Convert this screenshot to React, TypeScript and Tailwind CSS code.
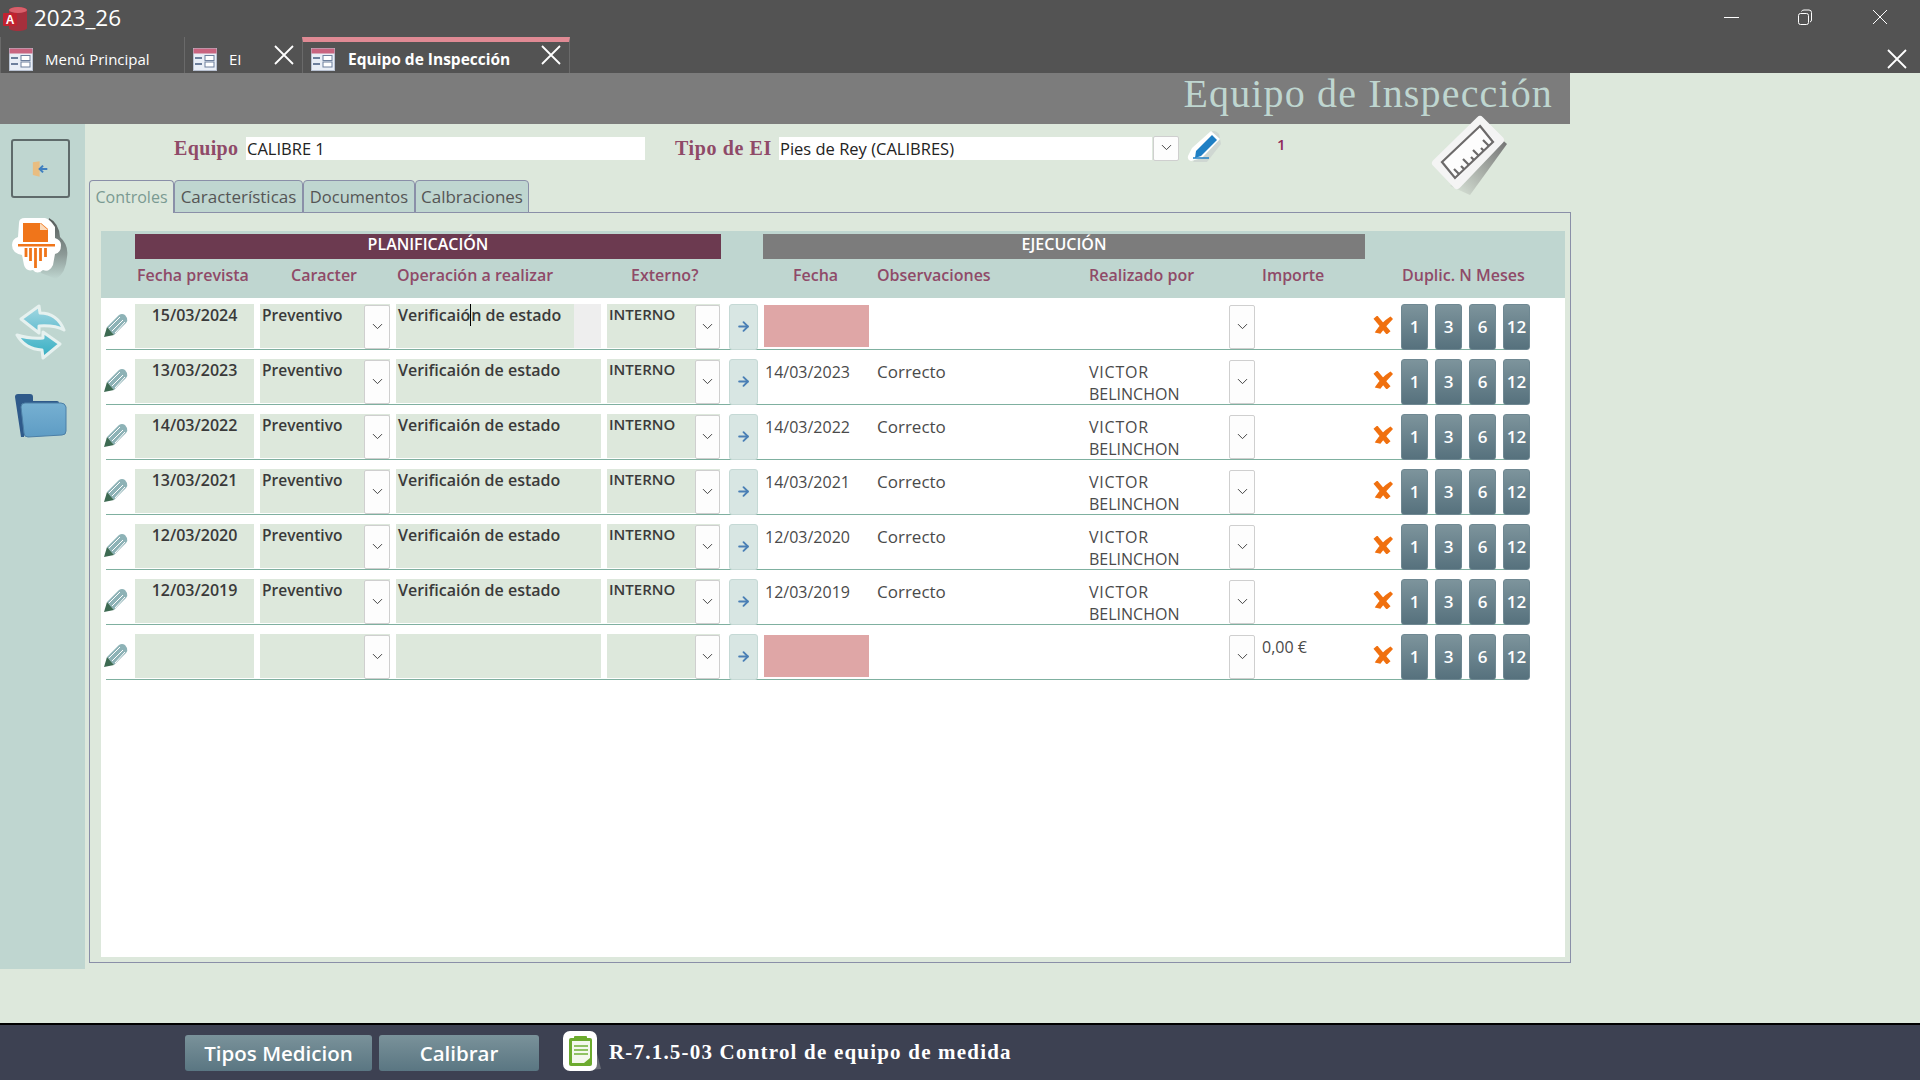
import { ArrowRight, ChevronDown } from "lucide-react";

const sans = "font-['Open_Sans',sans-serif]";
const serif = "font-['Liberation_Serif',serif]";

type Row = { date: string; done?: string; note?: string; by?: boolean; amount?: string; blank?: boolean };

const rows: Row[] = [
  { date: "15/03/2024" },
  { date: "13/03/2023", done: "14/03/2023", note: "Correcto", by: true },
  { date: "14/03/2022", done: "14/03/2022", note: "Correcto", by: true },
  { date: "13/03/2021", done: "14/03/2021", note: "Correcto", by: true },
  { date: "12/03/2020", done: "12/03/2020", note: "Correcto", by: true },
  { date: "12/03/2019", done: "12/03/2019", note: "Correcto", by: true },
  { date: "", blank: true, amount: "0,00 €" },
];

function FormIcon() {
  return (
    <svg width="24" height="23" viewBox="0 0 24 23" className="shrink-0">
      <rect x="0.5" y="0.5" width="23" height="22" fill="#e9eef6" stroke="#b9c2d2" />
      <rect x="0.5" y="0.5" width="23" height="5" fill="#c9647f" />
      <rect x="2" y="9" width="7" height="2" fill="#6d7f9c" />
      <rect x="2" y="15" width="7" height="2" fill="#6d7f9c" />
      <rect x="12" y="7.5" width="9" height="5" fill="#fff" stroke="#6d7f9c" />
      <rect x="12" y="14" width="9" height="5" fill="#fff" stroke="#6d7f9c" />
    </svg>
  );
}

function BigX({ size }: { size: number }) {
  return (
    <svg width={size} height={size} viewBox="0 0 20 20" className="shrink-0">
      <path d="M1 1 L19 19 M19 1 L1 19" stroke="#fff" strokeWidth="1.8" />
    </svg>
  );
}

function AccessIcon() {
  return (
    <svg width="26" height="26" viewBox="0 0 26 26" className="shrink-0">
      <path d="M7 4 C7 0 25 0 25 4 V22 C25 26 7 26 7 22Z" fill="#a52f3c" />
      <ellipse cx="16" cy="4" rx="9" ry="3" fill="#d8606b" />
      <rect x="1" y="7" width="14" height="13" rx="1" fill="#c1222f" />
      <text x="8" y="18" textAnchor="middle" fontSize="12" fontWeight="700" fill="#fff" fontFamily="Liberation Sans">
        A
      </text>
    </svg>
  );
}

function Pencil() {
  return (
    <svg width="24" height="24" viewBox="0 0 24 24" className="shrink-0 mt-[9px]">
      <path d="M3 14 L15 2 Q18 0 21 2 L23 5 Q24 8 22 10 L10 22Z" fill="#8db2b6" />
      <path d="M5 15 L16 4 M8 18 L19 7 M11 20 L21 9" stroke="#fff" strokeWidth="1" />
      <path d="M3 14 L10 22 L0 24Z" fill="#3c6a52" />
    </svg>
  );
}

function OrangeX() {
  return (
    <svg width="20" height="18" viewBox="0 0 20 18" className="shrink-0 mt-[12px]">
      <path d="M4 3 L14 15" stroke="#f0700f" strokeWidth="5" strokeLinecap="square" />
      <path d="M3 16 Q9 7 17.5 1.5 L19 3 Q12 10 7 17 Z" fill="#f0700f" stroke="#f0700f" strokeWidth="1.5" />
    </svg>
  );
}

function Combo({ className }: { className: string }) {
  return (
    <div className={`flex items-center justify-center pb-[2px] bg-[#fdfdfd] border border-[#cfcfcf] rounded-[2px] shrink-0 ${className}`}>
      <ChevronDown size={17} strokeWidth={1.4} className="text-[#444]" />
    </div>
  );
}

function GridRow({ r, first }: { r: Row; first: boolean }) {
  const box = "bg-[#dde8dc] h-[44px] shrink-0";
  const strong = "text-[16px] font-semibold text-[#3a3a3a] leading-[22px]";
  const plain = "text-[16px] text-[#4a4a4a] leading-[22px]";
  return (
    <div className="ml-[5px] mb-[9px] w-[1417px] h-[46px] flex border-b border-[#7fb0a0]">
      <div className="-ml-[2px] w-[24px] shrink-0">
        <Pencil />
      </div>
      <div className={`${box} ml-[7px] w-[119px] text-center ${strong}`}>{r.date}</div>
      <div className={`${box} ml-[6px] w-[130px] flex justify-between pl-[2px] ${strong}`}>
        <span className="text-[15.5px]">{r.blank ? "" : "Preventivo"}</span>
        <Combo className="w-[26px] h-[44px] mt-[1px]" />
      </div>
      <div className={`${box} ml-[6px] w-[205px] flex justify-between pl-[2px] ${strong}`}>
        {r.blank ? (
          <span />
        ) : first ? (
          <span>
            Verificaió<span className="border-l border-black">n</span> de estado
          </span>
        ) : (
          <span>Verificaión de estado</span>
        )}
        {first && <div className="w-[27px] h-[44px] bg-[#eeeeee]" />}
      </div>
      <div className={`${box} ml-[6px] w-[113px] flex justify-between pl-[2px] ${strong}`}>
        <span className="text-[15px] -mt-px">{r.blank ? "" : "INTERNO"}</span>
        <Combo className="w-[25px] h-[44px] mt-[1px]" />
      </div>
      <div className="ml-[9px] w-[29px] h-[46px] shrink-0 flex items-center justify-center pb-[2px] pr-px bg-[#d8e6e3] border border-[#c5d9d5] rounded-[3px]">
        <ArrowRight size={15} strokeWidth={3} className="text-[#4a7fb5]" />
      </div>
      <div className="ml-[6px] w-[105px] shrink-0">
        {r.done ? (
          <div className={`${plain} pt-[2px] pl-[1px]`}>{r.done}</div>
        ) : (
          <div className="mt-[1px] h-[42px] bg-[#dfa6a6]" />
        )}
      </div>
      <div className={`ml-[8px] w-[212px] shrink-0 pt-[2px] ${plain} text-[17px]`}>{r.note}</div>
      <div className={`w-[140px] shrink-0 pt-[2px] ${plain}`}>
        {r.by && (
          <>
            <span className="tracking-[0.8px]">VICTOR</span>
            <br />
            BELINCHON
          </>
        )}
      </div>
      <Combo className="w-[26px] h-[44px] mt-[1px]" />
      <div className={`ml-[7px] w-[111px] pt-[2px] shrink-0 ${plain} text-[15px]`}>{r.amount}</div>
      <OrangeX />
      <div className="ml-[8px] flex gap-[7px] shrink-0">
        {["1", "3", "6", "12"].map((n) => (
          <div
            key={n}
            className={`w-[27px] h-[46px] flex items-center justify-center rounded-[3px] border border-[#6f8892] bg-gradient-to-b from-[#7d949c] to-[#56717d] text-white text-[17px] font-semibold ${sans}`}
          >
            {n}
          </div>
        ))}
      </div>
    </div>
  );
}

export default function App() {
  const heading = "text-[16px] font-semibold text-[#8f4a68] shrink-0";
  const tab = "h-[33px] flex items-center justify-center border border-[#8a8fa8] rounded-t-[4px] shrink-0";
  return (
    <div className={`w-[1920px] h-[1080px] flex flex-col overflow-hidden bg-[#dde8dc] ${sans}`}>
      {/* title bar */}
      <div className="h-[37px] bg-[#535353] flex items-center text-white shrink-0">
        <div className="ml-[2px] flex items-center gap-[6px]">
          <AccessIcon />
          <span className="text-[22.5px] leading-none">2023_26</span>
        </div>
        <div className="ml-auto -mt-[3px] flex items-center">
          <div className="w-[15px] h-px bg-white mr-[58px]" />
          <svg width="16" height="16" viewBox="0 0 16 16" className="mr-[59px]" fill="none" stroke="#fff" strokeWidth="1">
            <rect x="1.5" y="4.5" width="10" height="11" rx="2" />
            <path d="M4.5 2.5 Q5 1 7 1 H12 Q14.5 1 14.5 3.5 V11 Q14.5 12.5 13 13" />
          </svg>
          <svg width="16" height="16" viewBox="0 0 16 16" className="mr-[32px]" stroke="#fff" strokeWidth="1">
            <path d="M1 1 L15 15 M15 1 L1 15" />
          </svg>
        </div>
      </div>

      {/* tabs of the database window */}
      <div className="h-[36px] bg-[#535353] flex text-white text-[15px] shrink-0">
        <div className="w-[185px] flex items-center border-l border-r border-[#6a6a6a] pl-[8px] pt-[9px]">
          <FormIcon />
          <span className="ml-[12px]">Menú Principal</span>
        </div>
        <div className="w-[117px] flex items-center pl-[8px] pt-[9px]">
          <FormIcon />
          <span className="ml-[12px]">EI</span>
          <div className="ml-auto mr-[8px] -mt-[9px]">
            <BigX size={20} />
          </div>
        </div>
        <div className="w-[268px] flex items-center border-t-[5px] border-[#e08a94] border-x border-x-[#6a6a6a] pl-[8px] pt-[4px]">
          <FormIcon />
          <span className="ml-[13px] font-bold text-[15.5px]">Equipo de Inspección</span>
          <div className="ml-auto mr-[8px] -mt-[9px]">
            <BigX size={20} />
          </div>
        </div>
        <div className="ml-auto mr-[13px] self-end mb-[4px]">
          <BigX size={20} />
        </div>
      </div>

      {/* form header */}
      <div className="w-[1570px] h-[51px] bg-[#7c7c7c] flex items-center justify-end pr-[17px] pb-[10px] shrink-0">
        <span className={`text-[40px] leading-none tracking-[1.15px] text-[#bfd6d0] ${serif}`}>Equipo de Inspección</span>
      </div>

      <div className="flex flex-1 min-h-0">
        {/* left rail */}
        <div className="w-[85px] h-[845px] bg-[#bfd6d0] shrink-0 flex flex-col">
          <div className="ml-[11px] mt-[15px] w-[59px] h-[59px] border-2 border-[#5f6b6b] rounded-[3px] flex items-center justify-center">
            <svg width="17" height="16" viewBox="0 0 20 18">
              <path d="M1 1 L9 0 V18 L1 16Z" fill="#e9bd80" />
              <path d="M18 9 H9 M13 5 L9 9 L13 13" stroke="#3f7fc0" strokeWidth="2.4" fill="none" />
            </svg>
          </div>
          <svg width="60" height="65" viewBox="0 0 60 65" className="ml-[11px] mt-[17px]">
            <defs>
              <linearGradient id="shred" x1="0" y1="0" x2="0" y2="1">
                <stop offset="0" stopColor="#555b5a" />
                <stop offset="0.6" stopColor="#8c9a97" />
                <stop offset="1" stopColor="#bfd6d0" />
              </linearGradient>
            </defs>
            <path d="M38 3 Q48 8 49 22 Q58 30 56 42 Q55 58 45 64 L30 58Z" fill="url(#shred)" />
            <path
              d="M8 8 Q8 3 14 3 H34 Q39 4 44 12 V23 Q50 25 50 30 Q50 38 44 39 L42 50 Q38 58 32 55 Q26 60 22 55 Q15 57 13 50 L11 40 Q1 38 1 30 Q1 24 7 22Z"
              fill="#fff"
            />
            <path d="M12 8 H30 L37 14 V27 H12Z" fill="#f0751a" />
            <path d="M29 8 V15 H37Z" fill="#fbd9b8" />
            <rect x="7" y="29" width="37" height="2.5" fill="#f0751a" />
            <path d="M15 33 V42 M19.5 33 V46 M24.5 33 V53 M29.5 33 V46 M34.5 33 V42" stroke="#f0751a" strokeWidth="2.8" />
          </svg>
          <svg width="52" height="60" viewBox="-2 -2 52 60" className="ml-[15px] mt-[23px]">
            <defs>
              <linearGradient id="syncTop" x1="0" y1="0" x2="0" y2="1">
                <stop offset="0" stopColor="#a5d8e2" />
                <stop offset="1" stopColor="#62bdd0" />
              </linearGradient>
              <linearGradient id="syncBottom" x1="0" y1="0" x2="0" y2="1">
                <stop offset="0" stopColor="#6cc4d4" />
                <stop offset="1" stopColor="#35aec2" />
              </linearGradient>
            </defs>
            <path d="M43 39 L26 53 L25 45 Q8 44 0 30 Q12 34 26 33 L26 27Z" fill="url(#syncBottom)" stroke="#e6f1ef" strokeWidth="3" strokeLinejoin="round" />
            <path d="M4 14 L22 1 L23 8 Q40 8 47 25 Q38 20 22 21 L22 28Z" fill="url(#syncTop)" stroke="#e6f1ef" strokeWidth="3" strokeLinejoin="round" />
          </svg>
          <svg width="54" height="46" viewBox="0 0 54 46" className="ml-[13px] mt-[30px]">
            <defs>
              <linearGradient id="folder" x1="0" y1="0" x2="0" y2="1">
                <stop offset="0" stopColor="#76b0d2" />
                <stop offset="1" stopColor="#5e9cc4" />
              </linearGradient>
            </defs>
            <path d="M2 4 Q2 1 5 1 H17 Q20 1 20 4 V8 H44 Q46 8 46 10 V14 H16 L11 44 H8Z" fill="#2f5a8a" />
            <path d="M8 14 Q8 10 12 10 H48 Q52 10 53 14 L53 38 Q53 42 49 42 L15 44 Q11 44 11 40Z" fill="url(#folder)" stroke="#4c7fa6" />
          </svg>
        </div>

        {/* form body */}
        <div className="flex-1 min-w-0 pl-[4px] flex flex-col relative">
          <div className="h-[56px] flex pt-[13px] shrink-0">
            <span className={`ml-[85px] w-[72px] text-[20px] leading-[23px] font-bold tracking-[0.35px] text-[#8f4a68] ${serif}`}>Equipo</span>
            <div className="w-[399px] h-[23px] bg-white text-[16.5px] leading-[23px] text-[#222] pl-[1px]">CALIBRE 1</div>
            <span className={`ml-[30px] w-[104px] text-[20px] leading-[23px] font-bold text-[#8f4a68] tracking-[0.6px] ${serif}`}>Tipo de EI</span>
            <div className="w-[373px] h-[23px] bg-white text-[16.5px] leading-[23px] text-[#222] pl-[1px]">Pies de Rey (CALIBRES)</div>
            <Combo className="ml-[1px] -mt-[1px] w-[26px] h-[25px]" />
            <svg width="35" height="35" viewBox="0 0 35 35" className="ml-[8px] -mt-[7px]">
              <path d="M24 2 Q28 -1 32 4 L34 14 L20 32 L6 32Z" fill="#c9d0cd" opacity="0.7" />
              <path d="M24 1 L33 9 L15 28 L4 31 Q0 30 1 26 L5 18Z" fill="#fff" />
              <path d="M25 5 L30 10 L14 26 L8 28 L9 21Z" fill="#1f7fc4" />
              <path d="M6 28 H22" stroke="#1f7fc4" strokeWidth="1.5" />
            </svg>
            <span className="ml-[55px] -mt-[4px] text-[15px] leading-[23px] font-semibold text-[#8f2a5a]">1</span>
          </div>

          {/* ruler sticker, overlaps the grey header */}
          <svg width="100" height="90" viewBox="0 0 100 90" className="absolute left-[1335px] -top-[14px]">
            <defs>
              <linearGradient id="rulerShade" x1="1" y1="0" x2="0" y2="1">
                <stop offset="0" stopColor="#6f6f6f" />
                <stop offset="1" stopColor="#dde8dc" />
              </linearGradient>
            </defs>
            <path d="M78 26 L87 34 L50 85 L30 76Z" fill="url(#rulerShade)" />
            <path d="M60 10 L80 30 L37 75 L16 53Z" fill="#fdfdfd" stroke="#f4f4f4" strokeWidth="8" strokeLinejoin="round" />
            <path d="M60 16 L73 32 L35 68 L22 52Z" fill="none" stroke="#6c6a6a" strokeWidth="2.2" />
            <path d="M39 64 L34 59 M44 59 L41 56 M49 55 L43 49 M54 50 L51 47 M59 46 L53 40 M64 41 L61 38 M69 36 L63 30" stroke="#6c6a6a" strokeWidth="2.2" />
          </svg>

          {/* tab strip */}
          <div className="flex h-[33px] -mb-px relative shrink-0">
            <div className={`${tab} w-[85px] bg-[#dde8dc] border-b-0 text-[16px] text-[#7a9a92]`}>Controles</div>
            <div className={`${tab} w-[129px] bg-[#bfd6d0] text-[17px] text-[#555]`}>Características</div>
            <div className={`${tab} w-[112px] bg-[#bfd6d0] pt-px text-[16.5px] text-[#555]`}>Documentos</div>
            <div className={`${tab} w-[114px] bg-[#bfd6d0] text-[17px] text-[#555]`}>Calbraciones</div>
          </div>

          {/* tab page */}
          <div className="w-[1482px] h-[751px] border border-[#8a8fa8] pl-[11px] pr-[5px] pt-[18px] pb-[5px] shrink-0">
            <div className="h-full bg-white flex flex-col">
              <div className="h-[67px] bg-[#bfd6d0] pt-[3px] shrink-0">
                <div className="flex pl-[34px] h-[25px] text-white text-[16px] font-semibold leading-[20px] text-center">
                  <div className="w-[586px] bg-[#6c3a50]">PLANIFICACIÓN</div>
                  <div className="ml-[42px] w-[602px] bg-[#7c7c7c]">EJECUCIÓN</div>
                </div>
                <div className="flex pl-[36px] mt-[5px] leading-[22px]">
                  <span className={`${heading} w-[154px]`}>Fecha prevista</span>
                  <span className={`${heading} w-[106px]`}>Caracter</span>
                  <span className={`${heading} w-[234px]`}>Operación a realizar</span>
                  <span className={`${heading} w-[162px]`}>Externo?</span>
                  <span className={`${heading} w-[84px]`}>Fecha</span>
                  <span className={`${heading} w-[212px]`}>Observaciones</span>
                  <span className={`${heading} w-[173px]`}>Realizado por</span>
                  <span className={`${heading} w-[140px]`}>Importe</span>
                  <span className={heading}>Duplic. N Meses</span>
                </div>
              </div>
              <div className="pt-[6px]">
                {rows.map((r, i) => (
                  <GridRow key={i} r={r} first={i === 0} />
                ))}
              </div>
            </div>
          </div>
        </div>
      </div>

      {/* footer */}
      <div className="h-[57px] bg-[#3d4152] border-t-2 border-black flex shrink-0 pt-[10px]">
        <div className="ml-[185px] w-[187px] h-[36px] rounded-[3px] bg-gradient-to-b from-[#7a929a] to-[#5a7682] text-white text-[20.5px] font-semibold flex items-center justify-center">
          Tipos Medicion
        </div>
        <div className="ml-[7px] w-[160px] h-[36px] rounded-[3px] bg-gradient-to-b from-[#7a929a] to-[#5a7682] text-white text-[20.5px] font-semibold flex items-center justify-center">
          Calibrar
        </div>
        <svg width="38" height="42" viewBox="0 0 38 42" className="ml-[24px] -mt-[5px]">
          <path d="M29 4 L38 39 L15 41Z" fill="#6b6f78" />
          <rect x="0" y="1" width="34" height="40" rx="7" fill="#fff" />
          <rect x="6" y="8" width="23" height="28" rx="2" fill="#6cab2e" />
          <path d="M9 11 H27 V28 L21 33 H9Z" fill="#f3f8ec" />
          <rect x="11" y="6" width="13" height="5" rx="1" fill="#6cab2e" />
          <path d="M11 16 H25 M11 20 H25 M11 24 H25" stroke="#8fc262" strokeWidth="2" />
        </svg>
        <span className={`ml-[8px] mt-[3px] text-[21px] leading-[28px] font-bold tracking-[1.2px] text-white ${serif}`}>
          R-7.1.5-03 Control de equipo de medida
        </span>
      </div>
    </div>
  );
}
